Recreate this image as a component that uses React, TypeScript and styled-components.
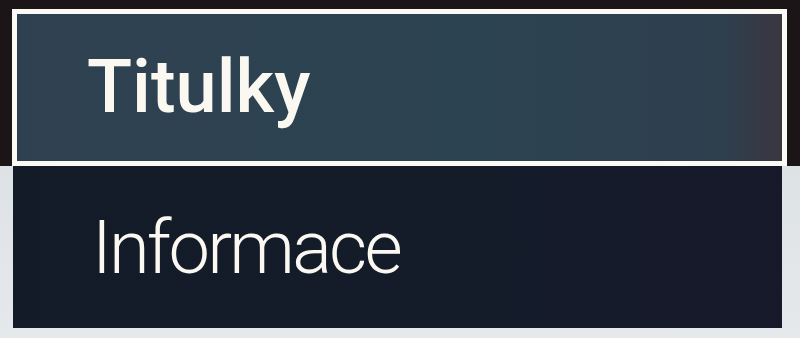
import React from "react";
import styled, { createGlobalStyle } from "styled-components";

const Global = createGlobalStyle`
  html, body { margin: 0; padding: 0; }
  body { width: 800px; height: 338px; overflow: hidden; font-family: Roboto, "Noto Sans", sans-serif; }
`;

const Page = styled.div`
  width: 800px;
  height: 338px;
  background: linear-gradient(to bottom, #1c1517 0, #1c1517 166px, #dde2e5 166px, #e6e9eb 338px);
  display: flex;
  flex-direction: column;
  align-items: flex-start;
  padding: 9px 0 0 12px;
  box-sizing: border-box;
`;

const Menu = styled.div`
  display: flex;
  flex-direction: column;
`;

const Item = styled.div<{ $focused?: boolean }>`
  box-sizing: border-box;
  display: flex;
  align-items: center;
  width: ${(p) => (p.$focused ? 775 : 769)}px;
  height: ${(p) => (p.$focused ? 157 : 162)}px;
  margin-left: ${(p) => (p.$focused ? 0 : 1)}px;
  border: ${(p) => (p.$focused ? "5px solid #fbfaf4" : "none")};
  background: ${(p) =>
    p.$focused
      ? "linear-gradient(to right, #2f4150 0%, #2c4352 60%, #2e3f4e 92%, #3a3640 100%)"
      : "linear-gradient(to right, #131a28 0%, #141c2a 60%, #17192a 100%)"};
  padding-left: ${(p) => (p.$focused ? 70 : 79)}px;
  color: #fbf8f2;
  font-size: 74px;
  font-weight: ${(p) => (p.$focused ? 500 : 300)};
  letter-spacing: ${(p) => (p.$focused ? "0px" : "-2.8px")};
  line-height: 1;
`;

const Label = styled.span<{ $focused?: boolean }>`
  position: relative;
  top: ${(p) => (p.$focused ? -1 : 1)}px;
`;

export default function App() {
  return (
    <Page>
      <Global />
      <Menu>
        <Item $focused>
          <Label $focused>Titulky</Label>
        </Item>
        <Item>
          <Label>Informace</Label>
        </Item>
      </Menu>
    </Page>
  );
}
